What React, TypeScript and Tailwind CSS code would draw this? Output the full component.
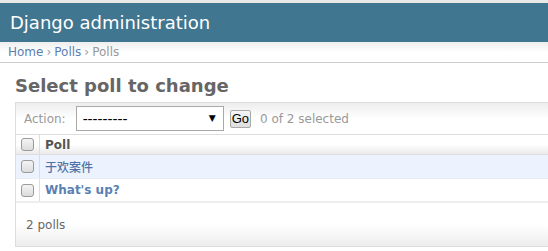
import React from "react";

function Check() {
  return (
    <span className="block w-[13px] h-[13px] rounded-[3px] border border-[#9a9a9a] bg-gradient-to-b from-[#f4f4f4] to-[#dcdcdc]" />
  );
}

export default function App() {
  return (
    <div
      className="w-full h-[251px] overflow-hidden bg-white text-[#333]"
      style={{ fontFamily: '"DejaVu Sans", Verdana, "Noto Sans CJK SC", sans-serif' }}
    >
      <div className="h-[3px] bg-[#e9e9e9]" />
      <div className="h-[39px] bg-[#417690] flex items-center pl-[10px]">
        <span className="text-[18px] text-white leading-none">Django administration</span>
      </div>
      <div className="h-[21px] border-b border-[#cccccc] bg-gradient-to-b from-[#eeeeee] via-white to-white flex items-center pl-[8px] text-[12px] leading-none">
        <span className="text-[#5b80b2]">Home</span>
        <span className="text-[#999] mx-[3px]">›</span>
        <span className="text-[#5b80b2]">Polls</span>
        <span className="text-[#999] mx-[3px]">›</span>
        <span className="text-[#999]">Polls</span>
      </div>
      <div className="pl-[15px]">
        <h1 className="text-[18px] font-bold text-[#666] leading-none pt-[14px] pb-[7px]">
          Select poll to change
        </h1>
        <div className="border-t border-l border-b border-[#dddddd] mr-[-20px]">
          <div className="h-[32px] border-b border-[#dddddd] bg-gradient-to-b from-[#ededed] via-white to-white flex items-center pl-[8px] text-[12px]">
            <span className="text-[#999]">Action:</span>
            <div className="ml-[10px] w-[148px] h-[25px] border border-[#a9a9a9] bg-white flex items-center justify-between pl-[6px] pr-[7px]">
              <span className="text-black text-[15px] leading-none" style={{ fontFamily: '"Liberation Sans", Arial, sans-serif' }}>
                ---------
              </span>
              <span className="text-black text-[9px] leading-none">▼</span>
            </div>
            <div
              className="ml-[6px] h-[18px] px-[1px] border border-[#a9a9a9] rounded-[2px] bg-gradient-to-b from-[#f6f6f6] to-[#dedede] flex items-center text-[13px] text-black leading-none"
              style={{ fontFamily: '"Liberation Sans", Arial, sans-serif' }}
            >
              Go
            </div>
            <span className="ml-[9px] text-[#999]">0 of 2 selected</span>
          </div>
          <div className="h-[20px] border-b border-[#dddddd] bg-gradient-to-b from-white via-white to-[#eaeaea] flex">
            <div className="w-[24px] border-r border-[#dddddd] flex items-center justify-center">
              <Check />
            </div>
            <div className="pl-[5px] flex items-center text-[12px] font-bold text-[#555]">Poll</div>
          </div>
          <div className="h-[24px] border-b border-[#e8eef8] bg-[#edf3fe] flex">
            <div className="w-[24px] border-r border-[#dddddd] flex items-center justify-center">
              <Check />
            </div>
            <div className="pl-[5px] flex items-center text-[12px] font-medium text-[#4f73a8]" style={{ fontFamily: '"Noto Sans CJK SC", sans-serif' }}>
              于欢案件
            </div>
          </div>
          <div className="h-[24px] border-b-2 border-[#eeeeee] bg-white flex">
            <div className="w-[24px] border-r border-[#dddddd] flex items-center justify-center">
              <Check />
            </div>
            <div className="pl-[5px] flex items-center text-[12px] font-bold text-[#5b80b2]">What's up?</div>
          </div>
          <div className="h-[43px] bg-gradient-to-b from-white via-white to-[#ededed] flex items-center pl-[10px] text-[12px] text-[#666]">
            2 polls
          </div>
        </div>
      </div>
    </div>
  );
}
